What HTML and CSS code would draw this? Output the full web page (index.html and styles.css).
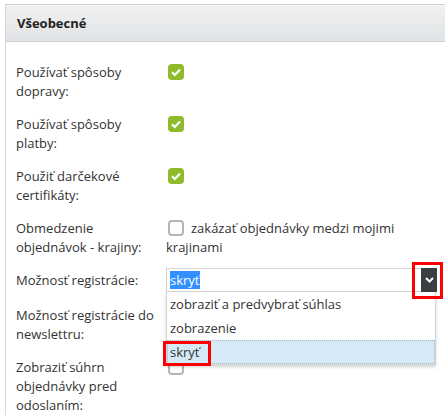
FILE: index.html
```html
<!DOCTYPE html>
<html lang="sk">
<head>
  <meta charset="UTF-8">
  <title>Všeobecné nastavenia</title>
  <link rel="stylesheet" href="styles.css">
</head>
<body>

<section class="panel">
  <header class="panel-head">Všeobecné</header>

  <div class="panel-body">
    <div class="field">
      <label>Používať spôsoby dopravy:</label>
      <div class="value"><span class="check is-on"></span></div>
    </div>

    <div class="field">
      <label>Používať spôsoby platby:</label>
      <div class="value"><span class="check is-on"></span></div>
    </div>

    <div class="field">
      <label>Použiť darčekové certifikáty:</label>
      <div class="value"><span class="check is-on"></span></div>
    </div>

    <div class="field">
      <label>Obmedzenie objednávok - krajiny:</label>
      <div class="value"><span class="check"></span>zakázať objednávky medzi mojimi krajinami</div>
    </div>

    <div class="field field-select">
      <label>Možnosť registrácie:</label>
      <div class="value">
        <div class="select">
          <div class="select-box">
            <span class="select-text"><span class="sel">skryť</span></span>
            <span class="select-btn">
              <svg width="9" height="6" viewBox="0 0 9 6"><path d="M1 1 L4.5 4.5 L8 1" fill="none" stroke="#fff" stroke-width="2"/></svg>
            </span>
          </div>
          <ul class="select-list">
            <li>zobraziť a predvybrať súhlas</li>
            <li>zobrazenie</li>
            <li class="active">skryť</li>
          </ul>
          <span class="mark mark-btn"></span>
          <span class="mark mark-opt"></span>
        </div>
      </div>
    </div>

    <div class="field">
      <label>Možnosť registrácie do newslettru:</label>
      <div class="value"></div>
    </div>

    <div class="field">
      <label>Zobraziť súhrn objednávky pred odoslaním:</label>
      <div class="value"><span class="check"></span></div>
    </div>
  </div>
</section>

</body>
</html>
```

FILE: styles.css
```css
body {
  margin: 0;
  background: #fff;
  font-family: 'Open Sans', 'DejaVu Sans', sans-serif;
  font-size: 13px;
  color: #333;
  overflow: hidden;
}
.panel {
  margin: 4px 0 0 5px;
  width: 460px;
  border-left: 1px solid #dadada;
  border-top: 1px solid #cfcfcf;
}
.panel-head {
  height: 35px;
  line-height: 35px;
  padding-left: 11px;
  font-weight: bold;
  color: #222;
  background: linear-gradient(#eff0f2, #e1e4e6);
  border-top: 1px solid #f7f8f8;
  border-bottom: 1px solid #cfcfcf;
}
.panel-body {
  padding: 21px 0 0 10px;
}
.field {
  display: grid;
  grid-template-columns: 150px 1fr;
  line-height: 19px;
  margin-bottom: 14px;
}
.field label {
  padding-right: 10px;
}
.value {
  width: 275px;
}
.check {
  display: inline-block;
  width: 16px;
  height: 16px;
  margin: 0 7px 0 2px;
  vertical-align: -3px;
  box-sizing: border-box;
  border: 2px solid #b4b4b4;
  border-radius: 4px;
  background: #fff;
}
.check.is-on {
  border: none;
  background: #8dbb2c url("data:image/svg+xml,%3Csvg xmlns='http://www.w3.org/2000/svg' width='16' height='16'%3E%3Cpath d='M4 8.2 L6.8 11 L12 5.6' fill='none' stroke='%23fff' stroke-width='2.2'/%3E%3C/svg%3E") no-repeat center;
}
.field-select {
  align-items: center;
  margin-top: -3px;
  margin-bottom: 14px;
}
.select {
  position: relative;
  width: 271px;
}
.select-box {
  display: flex;
  height: 24px;
  box-sizing: border-box;
  border: 1px solid #d3d3d3;
  background: #fff;
}
.select-text {
  flex: 1;
  padding: 1px 0 0 3px;
  line-height: 20px;
}
.sel {
  background: #3390ff;
  color: #fff;
}
.select-btn {
  width: 16px;
  margin: -1px -1px -1px 0;
  background: #3a3f44;
  display: flex;
  align-items: center;
  justify-content: center;
}
.select-list {
  position: absolute;
  top: 24px;
  left: 0;
  right: 1px;
  margin: 0;
  padding: 0;
  list-style: none;
  background: #fff;
  border: 1px solid #d6d6d6;
  border-top: none;
  box-shadow: 0 2px 3px rgba(0, 0, 0, 0.18);
  z-index: 2;
}
.select-list li {
  height: 24px;
  line-height: 24px;
  padding-left: 3px;
  box-sizing: border-box;
}
.select-list li.active {
  background: #d5e9f7;
  border: 1px dotted #9fb4c8;
  line-height: 22px;
  padding-left: 2px;
}
.mark {
  position: absolute;
  border: 3px solid #f00;
  z-index: 3;
}
.mark-btn {
  left: 246px;
  top: -6px;
  width: 25px;
  height: 31px;
}
.mark-opt {
  left: -3px;
  top: 73px;
  width: 42px;
  height: 19px;
}
```
